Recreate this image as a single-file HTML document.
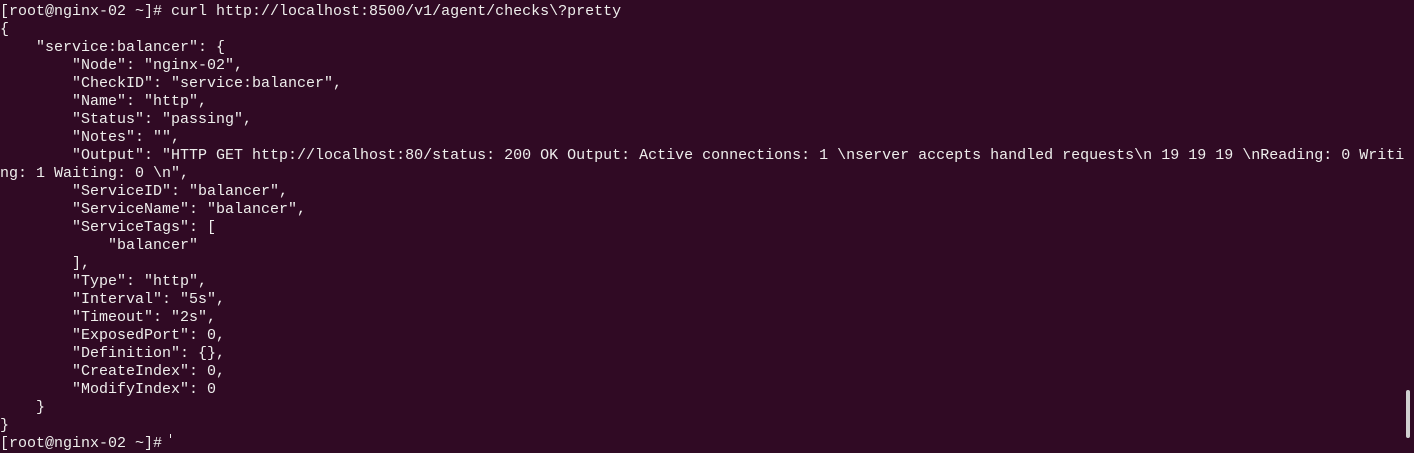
<!DOCTYPE html>
<html><head><style>
html,body{margin:0;padding:0;width:1414px;height:438px;overflow:hidden;background:#300a24;}
pre{position:absolute;left:0;top:3px;margin:0;font:15px/18px "Liberation Mono",monospace;color:#eeeeec;white-space:pre;}
.sb{position:absolute;left:1406px;top:390px;width:4px;height:48px;background:#d0d0d0;border-radius:2px;}
.cur{position:absolute;left:170px;top:434px;width:1px;height:4px;background:#eeeeec;}
</style></head><body>
<pre>[root@nginx-02 ~]# curl http://localhost:8500/v1/agent/checks\?pretty
{
    "service:balancer": {
        "Node": "nginx-02",
        "CheckID": "service:balancer",
        "Name": "http",
        "Status": "passing",
        "Notes": "",
        "Output": "HTTP GET http://localhost:80/status: 200 OK Output: Active connections: 1 \nserver accepts handled requests\n 19 19 19 \nReading: 0 Writi
ng: 1 Waiting: 0 \n",
        "ServiceID": "balancer",
        "ServiceName": "balancer",
        "ServiceTags": [
            "balancer"
        ],
        "Type": "http",
        "Interval": "5s",
        "Timeout": "2s",
        "ExposedPort": 0,
        "Definition": {},
        "CreateIndex": 0,
        "ModifyIndex": 0
    }
}
[root@nginx-02 ~]# </pre>
<div class="cur"></div>
<div class="sb"></div>
</body></html>
